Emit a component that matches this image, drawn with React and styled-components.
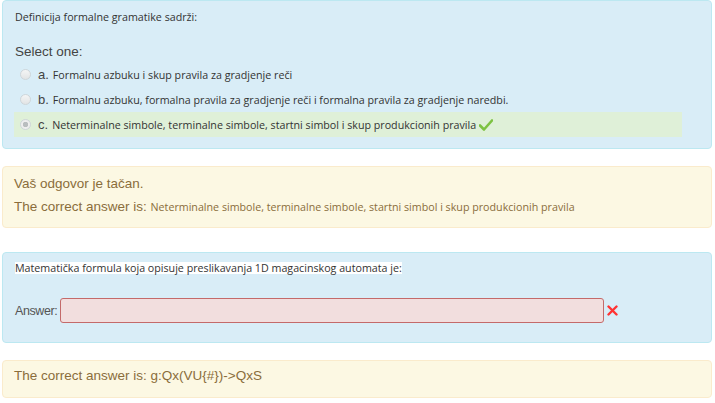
import styled, { createGlobalStyle } from "styled-components";

const GlobalStyle = createGlobalStyle`
  body {
    margin: 0;
    background: #ffffff;
  }
`;

const options = [
  { letter: "a.", text: "Formalnu azbuku i skup pravila za gradjenje reči" },
  { letter: "b.", text: "Formalnu azbuku, formalna pravila za gradjenje reči i formalna pravila za gradjenje naredbi." },
  { letter: "c.", text: "Neterminalne simbole, terminalne simbole, startni simbol i skup produkcionih pravila", correct: true },
];

const CheckIcon = () => (
  <svg width="14" height="12" viewBox="0 0 14 12">
    <path d="M1 6.5 L5 10.5 L13 1.5" fill="none" stroke="#7dc242" strokeWidth="2.6" strokeLinecap="round" strokeLinejoin="round" />
  </svg>
);

const CrossIcon = () => (
  <svg width="11" height="11" viewBox="0 0 11 11">
    <path d="M1.5 1.5 L9.5 9.5 M9.5 1.5 L1.5 9.5" fill="none" stroke="#f33" strokeWidth="2.4" strokeLinecap="round" />
  </svg>
);

const App = () => {
  return (
    <Page>
      <GlobalStyle />
      <InfoBox $pad="8px 29px 11px 11px">
        <Question>Definicija formalne gramatike sadrži:</Question>
        <Prompt>Select one:</Prompt>
        {options.map((opt) => (
          <OptionRow key={opt.letter} $correct={opt.correct}>
            <Radio $checked={opt.correct} />
            <Letter>{opt.letter}</Letter>
            <OptionText>{opt.text}</OptionText>
            {opt.correct && <Mark><CheckIcon /></Mark>}
          </OptionRow>
        ))}
      </InfoBox>

      <Feedback $pad="5px 11px 8px" $after="24px">
        <FeedLine>Vaš odgovor je tačan.</FeedLine>
        <FeedLine>
          The correct answer is: <SmallAnswer>Neterminalne simbole, terminalne simbole, startni simbol i skup produkcionih pravila</SmallAnswer>
        </FeedLine>
      </Feedback>

      <InfoBox $pad="7px 11px 19px 11px">
        <Question><Highlight>Matematička formula koja opisuje preslikavanja 1D magacinskog automata je:</Highlight></Question>
        <AnswerRow>
          <AnswerLabel>Answer:</AnswerLabel>
          <AnswerInput />
          <Mark><CrossIcon /></Mark>
        </AnswerRow>
      </InfoBox>

      <Feedback $pad="3px 11px 10px" $after="0">
        <FeedLine>The correct answer is: g:Qx(VU{"{#}"})-&gt;QxS</FeedLine>
      </Feedback>
    </Page>
  );
};

const Page = styled.div`
  width: 710px;
  padding-left: 2px;
  display: flex;
  flex-direction: column;
`;

const InfoBox = styled.div`
  background: #d9edf7;
  border: 1px solid #bce8f1;
  border-radius: 4px;
  padding: ${(p) => p.$pad};
  color: #333333;
`;

const Feedback = styled.div`
  margin-top: 17px;
  margin-bottom: ${(p) => p.$after};
  background: #fcf8e3;
  border: 1px solid #faebcc;
  border-radius: 4px;
  padding: ${(p) => p.$pad};
  color: #8a6d3b;
`;

const Question = styled.div`
  font-family: "Open Sans", sans-serif;
  font-size: 10.7px;
  line-height: 16px;
  padding-left: 1px;
`;

const Highlight = styled.span`
  background: #ffffff;
  display: inline-block;
  line-height: 12px;
`;

const Prompt = styled.div`
  font-family: "Liberation Sans", Arial, sans-serif;
  font-size: 13.5px;
  line-height: 16px;
  color: #444444;
  margin-top: 19px;
  margin-bottom: 2px;
  padding-left: 1px;
`;

const OptionRow = styled.div`
  display: flex;
  align-items: center;
  height: 25px;
  padding-left: 6px;
  background: ${(p) => (p.$correct ? "#dff0d8" : "transparent")};
`;

const Radio = styled.span`
  width: 9px;
  height: 9px;
  border-radius: 50%;
  border: 1px solid #cfd6da;
  background: ${(p) =>
    p.$checked
      ? "radial-gradient(circle, #b9bdbf 0 2.5px, #eeeeee 3px)"
      : "linear-gradient(#f4f5f5, #e2e4e5)"};
  margin-right: 7px;
  flex-shrink: 0;
`;

const Letter = styled.span`
  font-family: "Liberation Sans", Arial, sans-serif;
  font-size: 13px;
  color: #444444;
  margin-right: 4px;
`;

const OptionText = styled.span`
  font-family: "Open Sans", sans-serif;
  font-size: 10.7px;
  color: #333333;
`;

const Mark = styled.span`
  display: inline-flex;
  margin-left: 3px;
`;

const FeedLine = styled.div`
  font-family: "Liberation Sans", Arial, sans-serif;
  font-size: 13.5px;
  line-height: 23px;
`;

const SmallAnswer = styled.span`
  font-family: "Open Sans", sans-serif;
  font-size: 10.7px;
`;

const AnswerRow = styled.div`
  display: flex;
  align-items: center;
  margin-top: 22px;
  padding-left: 1px;
`;

const AnswerLabel = styled.span`
  font-family: "Liberation Sans", Arial, sans-serif;
  font-size: 12.5px;
  letter-spacing: -0.4px;
  color: #555555;
  margin-right: 3px;
`;

const AnswerInput = styled.div`
  width: 542px;
  height: 23px;
  background: #f2dede;
  border: 1px solid #c46a6a;
  border-radius: 3px;
`;

export default App;
